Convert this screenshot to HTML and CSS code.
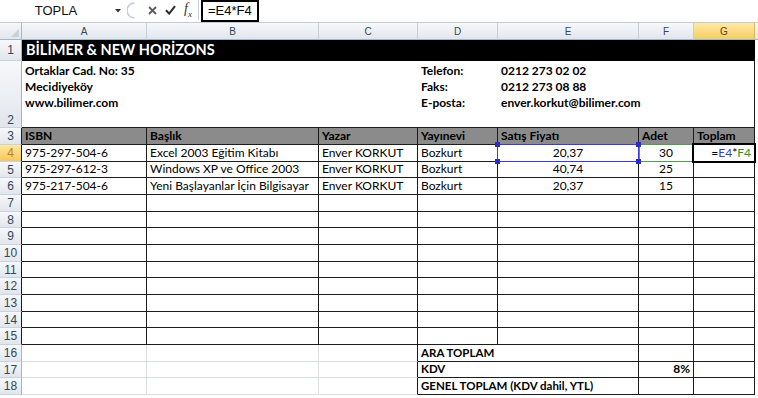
FILE: index.html
```html
<!DOCTYPE html>
<html lang="tr">
<head>
    <meta charset="UTF-8">
    <title>Kitap Siparişi</title>
    <link rel="stylesheet" href="styles.css">
</head>
<body>
    <div id="formula-bar">
        <div class="name-box">TOPLA</div>
        <div class="name-drop">
            <svg width="6" height="4" viewBox="0 0 6 4"><path d="M0 0H6L3 3.5Z" fill="#333"/></svg>
        </div>
        <div class="fx-tools">
            <svg class="grip" width="8" height="17" viewBox="0 0 8 17"><path d="M7.5 1A7.5 7.5 0 0 0 7.5 16" stroke="#c3ccd8" stroke-width="1.6" fill="none"/></svg>
            <svg class="tool" width="9" height="9" viewBox="0 0 9 9"><path d="M1 1L8 8M8 1L1 8" stroke="#5c5c5c" stroke-width="1.8"/></svg>
            <svg class="tool" width="11" height="10" viewBox="0 0 11 10"><path d="M1 5.2L4.2 8.6L10 1.2" stroke="#2b2b2b" stroke-width="2" fill="none"/></svg>
            <span class="fx"><i>f</i><sub>x</sub></span>
        </div>
        <div class="formula-input">
            <span class="formula-edit">=E4*F4</span>
        </div>
    </div>

    <div id="sheet">
        <!-- column headers -->
        <div class="row">
            <div class="corner"><svg width="8" height="8" viewBox="0 0 8 8"><path d="M8 0V8H0Z" fill="#c9d0d9"/></svg></div>
            <div class="ch">A</div>
            <div class="ch">B</div>
            <div class="ch">C</div>
            <div class="ch">D</div>
            <div class="ch">E</div>
            <div class="ch">F</div>
            <div class="ch ch-active">G</div>
            <div class="ch ch-rest"></div>
        </div>

        <div class="row">
            <div class="rh">1</div>
            <div class="cell title">BİLİMER &amp; NEW HORİZONS</div>
        </div>

        <div class="row">
            <div class="rh rh-bottom">2</div>
            <div class="cell info info-addr">
                <div>Ortaklar Cad. No: 35</div>
                <div>Mecidiyeköy</div>
                <div>www.bilimer.com</div>
            </div>
            <div class="cell info info-label">
                <div>Telefon:</div>
                <div>Faks:</div>
                <div>E-posta:</div>
            </div>
            <div class="cell info info-value">
                <div>0212 273 02 02</div>
                <div>0212 273 08 88</div>
                <div>enver.korkut@bilimer.com</div>
            </div>
        </div>

        <div class="row">
            <div class="rh edge">3</div>
            <div class="cell b hd">ISBN</div>
            <div class="cell b hd">Başlık</div>
            <div class="cell b hd">Yazar</div>
            <div class="cell b hd">Yayınevi</div>
            <div class="cell b hd">Satış Fiyatı</div>
            <div class="cell b hd">Adet</div>
            <div class="cell b hd">Toplam</div>
        </div>

        <div class="row">
            <div class="rh edge rh-active">4</div>
            <div class="cell b">975-297-504-6</div>
            <div class="cell b">Excel 2003 Eğitim Kitabı</div>
            <div class="cell b">Enver KORKUT</div>
            <div class="cell b">Bozkurt</div>
            <div class="cell b center ref-e">
                20,37
                <i class="knob tl"></i><i class="knob tr"></i><i class="knob bl"></i><i class="knob br"></i>
            </div>
            <div class="cell b center ref-f">30</div>
            <div class="cell b right active">
                <span class="f-eq">=</span><span class="f-e">E4</span><span class="f-eq">*</span><span class="f-f">F4</span>
            </div>
        </div>

        <div class="row">
            <div class="rh edge">5</div>
            <div class="cell b">975-297-612-3</div>
            <div class="cell b">Windows XP ve Office 2003</div>
            <div class="cell b">Enver KORKUT</div>
            <div class="cell b">Bozkurt</div>
            <div class="cell b center">40,74</div>
            <div class="cell b center">25</div>
            <div class="cell b"></div>
        </div>

        <div class="row">
            <div class="rh edge">6</div>
            <div class="cell b">975-217-504-6</div>
            <div class="cell b">Yeni Başlayanlar İçin Bilgisayar</div>
            <div class="cell b">Enver KORKUT</div>
            <div class="cell b">Bozkurt</div>
            <div class="cell b center">20,37</div>
            <div class="cell b center">15</div>
            <div class="cell b"></div>
        </div>

        <div class="row">
            <div class="rh edge">7</div>
            <div class="cell b"></div><div class="cell b"></div><div class="cell b"></div><div class="cell b"></div><div class="cell b"></div><div class="cell b"></div><div class="cell b"></div>
        </div>
        <div class="row">
            <div class="rh edge">8</div>
            <div class="cell b"></div><div class="cell b"></div><div class="cell b"></div><div class="cell b"></div><div class="cell b"></div><div class="cell b"></div><div class="cell b"></div>
        </div>
        <div class="row">
            <div class="rh edge">9</div>
            <div class="cell b"></div><div class="cell b"></div><div class="cell b"></div><div class="cell b"></div><div class="cell b"></div><div class="cell b"></div><div class="cell b"></div>
        </div>
        <div class="row">
            <div class="rh edge">10</div>
            <div class="cell b"></div><div class="cell b"></div><div class="cell b"></div><div class="cell b"></div><div class="cell b"></div><div class="cell b"></div><div class="cell b"></div>
        </div>
        <div class="row">
            <div class="rh edge">11</div>
            <div class="cell b"></div><div class="cell b"></div><div class="cell b"></div><div class="cell b"></div><div class="cell b"></div><div class="cell b"></div><div class="cell b"></div>
        </div>
        <div class="row">
            <div class="rh edge">12</div>
            <div class="cell b"></div><div class="cell b"></div><div class="cell b"></div><div class="cell b"></div><div class="cell b"></div><div class="cell b"></div><div class="cell b"></div>
        </div>
        <div class="row">
            <div class="rh edge">13</div>
            <div class="cell b"></div><div class="cell b"></div><div class="cell b"></div><div class="cell b"></div><div class="cell b"></div><div class="cell b"></div><div class="cell b"></div>
        </div>
        <div class="row">
            <div class="rh edge">14</div>
            <div class="cell b"></div><div class="cell b"></div><div class="cell b"></div><div class="cell b"></div><div class="cell b"></div><div class="cell b"></div><div class="cell b"></div>
        </div>
        <div class="row">
            <div class="rh edge">15</div>
            <div class="cell b"></div><div class="cell b"></div><div class="cell b"></div><div class="cell b"></div><div class="cell b"></div><div class="cell b"></div><div class="cell b"></div>
        </div>

        <div class="row">
            <div class="rh">16</div>
            <div class="cell"></div><div class="cell"></div><div class="cell bl"></div>
            <div class="cell b sum">ARA TOPLAM</div>
            <div class="cell b"></div><div class="cell b"></div>
        </div>
        <div class="row">
            <div class="rh">17</div>
            <div class="cell"></div><div class="cell"></div><div class="cell bl"></div>
            <div class="cell b sum">KDV</div>
            <div class="cell b right bold">8%</div><div class="cell b"></div>
        </div>
        <div class="row">
            <div class="rh">18</div>
            <div class="cell"></div><div class="cell"></div><div class="cell bl"></div>
            <div class="cell b sum">GENEL TOPLAM (KDV dahil, YTL)</div>
            <div class="cell b"></div><div class="cell b"></div>
        </div>
    </div>
</body>
</html>
```

FILE: styles.css
```css
:root {
    --grid-color: #dcdfe2;
    --line-color: #1c1c1c;
    --header-border: #9eb6ce;
    --cell-font: Lato, "Open Sans", sans-serif;
    --ui-font: "Liberation Sans", Arial, sans-serif;
}

body {
    margin: 0;
    background: #fff;
    width: 758px;
    height: 398px;
    overflow: hidden;
}

/* formula bar */

#formula-bar {
    display: flex;
    height: 23px;
    box-sizing: border-box;
    border-bottom: 1px solid #c3ccd6;
    background: #fff;
    font-family: var(--ui-font);
}

.name-box {
    width: 112px;
    text-align: center;
    font-size: 13px;
    line-height: 21px;
    color: #111;
}

.name-drop {
    width: 12px;
    display: flex;
    align-items: center;
    justify-content: center;
}

.fx-tools {
    width: 74px;
    display: flex;
    align-items: center;
    border-right: 1px solid #c7ced8;
    margin-bottom: 2px;
}

.grip {
    margin-left: 3px;
    margin-right: 13px;
}

.tool {
    margin-right: 8px;
}

.fx {
    font-family: "Liberation Serif", serif;
    font-size: 14px;
    color: #333;
}

.fx sub {
    font-size: 9px;
    font-style: italic;
}

.formula-input {
    flex: 1;
    padding-left: 2px;
}

.formula-edit {
    display: inline-block;
    height: 22px;
    box-sizing: border-box;
    padding: 0 5px 0 5px;
    border: 2px solid #000;
    font-size: 13px;
    line-height: 18px;
    color: #000;
}

/* sheet grid */

#sheet {
    display: grid;
    grid-template-columns: 22px 125px 172px 99px 80px 141px 55px 61px 3px;
    grid-template-rows: 17px 21px 67px 17px 17px 16px 17px 17px 16px 17px 17px 16px 17px 17px 16px 17px 17px 16px 17px;
}

.row {
    display: contents;
}

.corner,
.ch,
.rh {
    box-sizing: border-box;
    display: flex;
    align-items: center;
    justify-content: center;
    font-family: var(--ui-font);
    color: #34465b;
    background: linear-gradient(#f6f8fa, #e2e6ec);
}

.corner {
    border-right: 1px solid var(--header-border);
    border-bottom: 1px solid var(--header-border);
    justify-content: flex-end;
    align-items: flex-end;
    padding: 0 2px 2px 0;
}

.ch {
    font-size: 10px;
    border-right: 1px solid #c5cdd7;
    border-bottom: 1px solid var(--header-border);
}

.ch-active {
    background: linear-gradient(#fdeaa8, #f7cd60);
    color: #5a4414;
    border-right-color: #e2b75a;
}

.ch-rest {
    border-right: none;
}

.rh {
    grid-column: 1;
    font-size: 12px;
    border-right: 1px solid var(--header-border);
    border-bottom: 1px solid #c9d3df;
}

.rh-bottom {
    align-items: flex-end;
}

.rh.edge {
    border-right-color: var(--line-color);
}

.rh-active {
    background: linear-gradient(#fde7a0, #f6c85a);
    color: #c0801c;
}

.cell {
    box-sizing: border-box;
    display: flex;
    align-items: flex-end;
    padding: 0 3px 1px 3px;
    border-right: 1px solid var(--grid-color);
    border-bottom: 1px solid var(--grid-color);
    font-family: var(--cell-font);
    font-size: 12px;
    line-height: 14px;
    color: #000;
    white-space: nowrap;
    overflow: hidden;
}

.b {
    border-right-color: var(--line-color);
    border-bottom-color: var(--line-color);
}

.bl {
    border-right-color: var(--line-color);
}

.center {
    justify-content: center;
}

.right {
    justify-content: flex-end;
}

.bold {
    font-weight: bold;
}

.title {
    grid-column: 2 / 9;
    align-items: center;
    background: #000;
    color: #fff;
    font-weight: bold;
    font-size: 14.5px;
    padding-left: 4px;
    border-right: none;
    border-bottom: 1px solid #000;
}

.info {
    display: block;
    padding-top: 2px;
    font-weight: bold;
    line-height: 16px;
    border-right: none;
    border-bottom-color: var(--line-color);
}

.info-addr {
    grid-column: 2 / 5;
}

.info-value {
    grid-column: 6 / 9;
    border-right: 1px solid var(--line-color);
}

.hd {
    background: #8b8b8b;
    font-weight: bold;
}

.sum {
    grid-column: 5 / 7;
    font-weight: bold;
    font-size: 11.5px;
}

/* formula references */

.ref-e,
.ref-f,
.active {
    position: relative;
    overflow: visible;
}

.ref-e::after {
    content: "";
    position: absolute;
    top: -1px;
    left: -1px;
    right: -1px;
    bottom: -1px;
    border: 1px solid #3a3ad6;
}

.knob {
    position: absolute;
    width: 5px;
    height: 5px;
    background: #2b2bd0;
    z-index: 2;
}

.knob.tl { top: -3px; left: -3px; }
.knob.tr { top: -3px; right: -3px; }
.knob.bl { bottom: -3px; left: -3px; }
.knob.br { bottom: -3px; right: -3px; }

.ref-f::after {
    content: "";
    position: absolute;
    top: -1px;
    left: 0;
    right: -1px;
    bottom: -1px;
    border: 1px solid #4f9b4f;
}

.active::after {
    content: "";
    position: absolute;
    top: -2px;
    left: -2px;
    right: -2px;
    bottom: -2px;
    border: 2px solid #000;
}

.f-eq { color: #000; }
.f-e { color: #3a3ad6; }
.f-f { color: #2d8f2d; }
```
